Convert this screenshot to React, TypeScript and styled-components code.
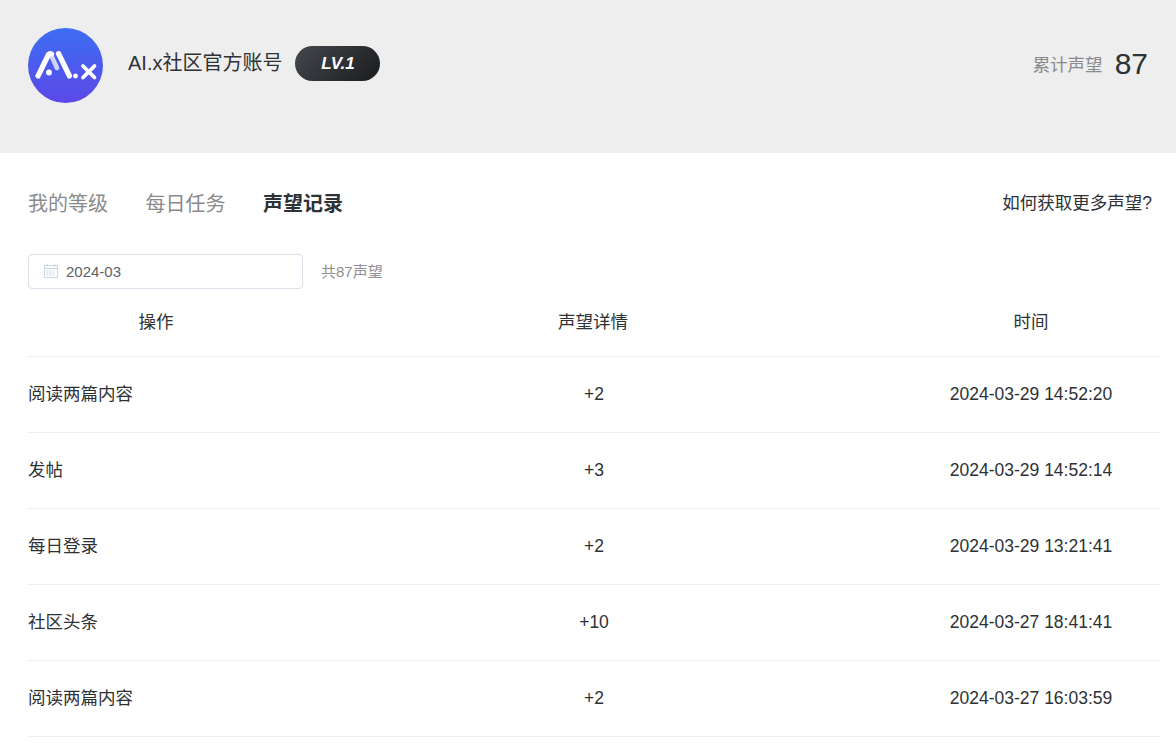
import React from 'react';
import { styled, createGlobalStyle } from 'styled-components';

const GlobalStyle = createGlobalStyle`
  html, body {
    margin: 0;
    padding: 0;
    background: #fff;
    overflow: hidden;
    font-family: Arial, "Liberation Sans", "Noto Sans CJK SC", sans-serif;
  }
`;

const tabs = ['我的等级', '每日任务', '声望记录'];

const records = [
  { action: '阅读两篇内容', detail: '+2', time: '2024-03-29 14:52:20' },
  { action: '发帖', detail: '+3', time: '2024-03-29 14:52:14' },
  { action: '每日登录', detail: '+2', time: '2024-03-29 13:21:41' },
  { action: '社区头条', detail: '+10', time: '2024-03-27 18:41:41' },
  { action: '阅读两篇内容', detail: '+2', time: '2024-03-27 16:03:59' },
];

function Logo() {
  return (
    <svg width="75" height="75" viewBox="0 0 75 75">
      <defs>
        <linearGradient id="logoBg" x1="0" y1="0" x2="0" y2="1">
          <stop offset="0" stopColor="#3c6ef3" />
          <stop offset="1" stopColor="#5c48e8" />
        </linearGradient>
      </defs>
      <circle cx="37.5" cy="37.5" r="37.5" fill="url(#logoBg)" />
      <g stroke="#fff" strokeLinecap="round" fill="none">
        <path d="M23 27 L29 40" strokeWidth="4.6" stroke="#cfd6fa" />
        <path d="M10 48 L20.5 26.5" strokeWidth="5.2" />
        <path d="M20.5 26.5 Q22 24.5 24 26" strokeWidth="4.6" />
        <path d="M30.5 25.5 L41.5 48" strokeWidth="5.2" />
        <path d="M55 38 L66.5 49.5 M66.5 38 L55 49.5" strokeWidth="3.8" />
      </g>
      <circle cx="21" cy="44.5" r="2.9" fill="#fff" />
      <circle cx="47.5" cy="48" r="2.4" fill="#fff" />
    </svg>
  );
}

function CalendarIcon() {
  return (
    <svg width="14" height="14" viewBox="0 0 14 14" fill="none" stroke="#c9d4e6" strokeWidth="1">
      <rect x="0.5" y="1.5" width="13" height="12" />
      <path d="M0.5 4.5 H13.5 M3.5 0 V2.5 M10.5 0 V2.5" />
      <path d="M2.5 7 H11.5 M2.5 9 H11.5 M2.5 11 H11.5" strokeDasharray="2 1" />
    </svg>
  );
}

export default function App() {
  return (
    <>
      <GlobalStyle />
      <Banner>
        <Profile>
          <Avatar>
            <Logo />
          </Avatar>
          <UserName>AI.x社区官方账号</UserName>
          <LevelBadge>LV.1</LevelBadge>
        </Profile>
        <Reputation>
          <ReputationLabel>累计声望</ReputationLabel>
          <ReputationValue>87</ReputationValue>
        </Reputation>
      </Banner>
      <Main>
        <TabBar>
          <Tabs>
            {tabs.map((tab, i) => (
              <Tab key={tab} $active={i === 2}>
                {tab}
              </Tab>
            ))}
          </Tabs>
          <HelpLink>如何获取更多声望?</HelpLink>
        </TabBar>
        <FilterRow>
          <DateInput>
            <CalendarIcon />
            <DateText>2024-03</DateText>
          </DateInput>
          <TotalText>共87声望</TotalText>
        </FilterRow>
        <Table>
          <HeadRow>
            <HeadCell>操作</HeadCell>
            <HeadCell>声望详情</HeadCell>
            <HeadCell>时间</HeadCell>
          </HeadRow>
          {records.map(r => (
            <Row key={r.time}>
              <ActionCell>{r.action}</ActionCell>
              <DetailCell>{r.detail}</DetailCell>
              <Cell>{r.time}</Cell>
            </Row>
          ))}
        </Table>
      </Main>
    </>
  );
}

const Banner = styled.header`
  display: flex;
  justify-content: space-between;
  align-items: flex-start;
  height: 153px;
  box-sizing: border-box;
  padding: 28px 28px 0 28px;
  background: #eeeeee;
`;

const Profile = styled.div`
  display: flex;
  align-items: flex-start;
`;

const Avatar = styled.div`
  width: 75px;
  height: 75px;
  line-height: 0;
`;

const UserName = styled.div`
  margin: 22px 0 0 25px;
  font-size: 20px;
  line-height: 26px;
  color: #2e3135;
`;

const LevelBadge = styled.div`
  width: 85px;
  height: 35px;
  margin: 18px 0 0 13px;
  border-radius: 18px;
  background: linear-gradient(135deg, #44474c, #1a1c1f);
  color: #fff;
  font-size: 17px;
  font-weight: 700;
  font-style: italic;
  line-height: 35px;
  text-align: center;
`;

const Reputation = styled.div`
  display: flex;
  align-items: center;
  gap: 12px;
  height: 36px;
  margin-top: 18px;
`;

const ReputationLabel = styled.span`
  font-size: 17.5px;
  line-height: 24px;
  padding-top: 2px;
  color: #8a8a8a;
`;

const ReputationValue = styled.span`
  font-size: 30px;
  line-height: 36px;
  color: #2e3135;
`;

const Main = styled.main`
  padding: 0 16px 0 28px;
`;

const TabBar = styled.div`
  display: flex;
  justify-content: space-between;
  align-items: center;
  height: 100px;
  padding-right: 8px;
`;

const Tabs = styled.div`
  display: flex;
  gap: 37.5px;
`;

const Tab = styled.div<{ $active: boolean }>`
  font-size: 20px;
  line-height: 28px;
  margin-top: 1px;
  font-weight: ${p => (p.$active ? 700 : 400)};
  color: ${p => (p.$active ? '#2e3135' : '#8a8a8a')};
`;

const HelpLink = styled.a`
  font-size: 17.5px;
  line-height: 24px;
  color: #2e3135;
`;

const FilterRow = styled.div`
  display: flex;
  align-items: center;
  gap: 18px;
  height: 36px;
`;

const DateInput = styled.div`
  display: flex;
  align-items: center;
  gap: 8px;
  width: 275px;
  height: 35px;
  box-sizing: border-box;
  padding-left: 15px;
  background: #fff;
  border: 1px solid #dcdfe9;
  border-radius: 4px;
`;

const DateText = styled.span`
  font-size: 15px;
  line-height: 20px;
  padding-top: 2px;
  color: #606266;
`;

const TotalText = styled.span`
  font-size: 15px;
  line-height: 20px;
  padding-top: 2px;
  color: #8f8f8f;
`;

const Table = styled.div`
  margin-top: 9px;
`;

const gridColumns = `
  display: grid;
  grid-template-columns: 256px 1fr 258px;
  align-items: center;
  box-sizing: border-box;
  border-bottom: 1px solid #eeeeee;
`;

const HeadRow = styled.div`
  ${gridColumns}
  height: 59px;
  padding-bottom: 11px;
`;

const HeadCell = styled.div`
  font-size: 17.5px;
  line-height: 24px;
  color: #2e3135;
  text-align: center;
`;

const Row = styled.div`
  ${gridColumns}
  height: 76px;
  padding-bottom: 2px;
`;

const Cell = styled.div`
  font-size: 17.5px;
  line-height: 24px;
  color: #2e3135;
  text-align: center;
`;

const ActionCell = styled(Cell)`
  text-align: left;
`;

const DetailCell = styled(Cell)`
  padding-left: 2px;
`;
